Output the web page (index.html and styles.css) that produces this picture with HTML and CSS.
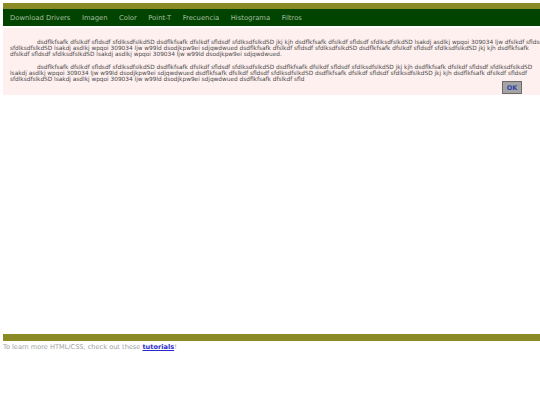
FILE: index.html
```html
<!DOCTYPE html>
<html>
<head>
<meta charset="utf-8">
<link rel="stylesheet" href="styles.css">
</head>
<body>
<div class="page">
  <div class="topbar"></div>
  <nav class="nav">
    <a href="#">Download Drivers</a>
    <a href="#">Imagen</a>
    <a href="#">Color</a>
    <a href="#">Point-T</a>
    <a href="#">Frecuencia</a>
    <a href="#">Histograma</a>
    <a href="#">Filtros</a>
  </nav>
  <main class="main">
    <div class="msg">
      <p>dsdflkfsafk dfslkdf sfldsdf sfdlksdfslkdSD dsdflkfsafk dfslkdf sfldsdf sfdlksdfslkdSD jkj kjh dsdflkfsafk dfslkdf sfldsdf sfdlksdfslkdSD lsakdj asdlkj wpqoi 309034 ljw dfslkdf sfldsdf sfdlksdfslkdSD lsakdj asdlkj wpqoi 309034 ljw w99ld dsodjkpw9ei sdjqwdwued dsdflkfsafk dfslkdf sfldsdf sfdlksdfslkdSD dsdflkfsafk dfslkdf sfldsdf sfdlksdfslkdSD jkj kjh dsdflkfsafk dfslkdf sfldsdf sfdlksdfslkdSD lsakdj asdlkj wpqoi 309034 ljw w99ld dsodjkpw9ei sdjqwdwued.</p>
      <p>dsdflkfsafk dfslkdf sfldsdf sfdlksdfslkdSD dsdflkfsafk dfslkdf sfldsdf sfdlksdfslkdSD dsdflkfsafk dfslkdf sfldsdf sfdlksdfslkdSD jkj kjh dsdflkfsafk dfslkdf sfldsdf sfdlksdfslkdSD lsakdj asdlkj wpqoi 309034 ljw w99ld dsodjkpw9ei sdjqwdwued dsdflkfsafk dfslkdf sfldsdf sfdlksdfslkdSD dsdflkfsafk dfslkdf sfldsdf sfdlksdfslkdSD jkj kjh dsdflkfsafk dfslkdf sfldsdf sfdlksdfslkdSD lsakdj asdlkj wpqoi 309034 ljw w99ld dsodjkpw9ei sdjqwdwued dsdflkfsafk dfslkdf sfld</p>
      <div class="actions"><button class="ok">OK</button></div>
    </div>
  </main>
  <div class="footbar"></div>
  <p class="foot">To learn more HTML/CSS, check out these <a href="#">tutorials</a>!</p>
</div>
</body>
</html>
```

FILE: styles.css
```css
html, body {
  margin: 0;
  padding: 0;
  background: #ffffff;
  overflow: hidden;
}
body {
  padding: 3px 0 0 3px;
  font-family: "DejaVu Sans", Verdana, sans-serif;
}
.page {
  width: 560px;
}
.topbar {
  height: 6px;
  background: #8b8b26;
}
.nav {
  display: flex;
  gap: 11.5px;
  height: 17px;
  align-items: center;
  padding-left: 7px;
  background: #004400;
}
.nav a {
  color: #a9bfa0;
  font-size: 6.8px;
  text-decoration: none;
}
.main {
  padding-top: 2px;
  height: 306px;
}
.msg {
  background: #fff0f0;
  padding: 11px 7px 1px 7px;
  width: 538px;
  color: #4a4a4a;
  font-size: 5.8px;
  line-height: 6px;
}
.msg p {
  margin: 0 0 7px 0;
  text-indent: 27px;
}
.msg p:last-of-type {
  margin-bottom: 0;
}
.actions {
  display: flex;
  justify-content: flex-end;
  margin-top: -1px;
  padding-right: 26px;
}
.ok {
  width: 20px;
  height: 13px;
  padding: 0;
  background: #a3a3a3;
  border: 1px solid #6a6a6a;
  color: #3344aa;
  font-family: "DejaVu Sans", Verdana, sans-serif;
  font-weight: bold;
  font-size: 6.5px;
}
.footbar {
  height: 7px;
  background: #8b8b26;
}
.foot {
  margin: 2px 0 0 0;
  font-size: 6.6px;
  color: #a0a0a0;
}
.foot a {
  color: #2a2acc;
  font-weight: bold;
}
```
